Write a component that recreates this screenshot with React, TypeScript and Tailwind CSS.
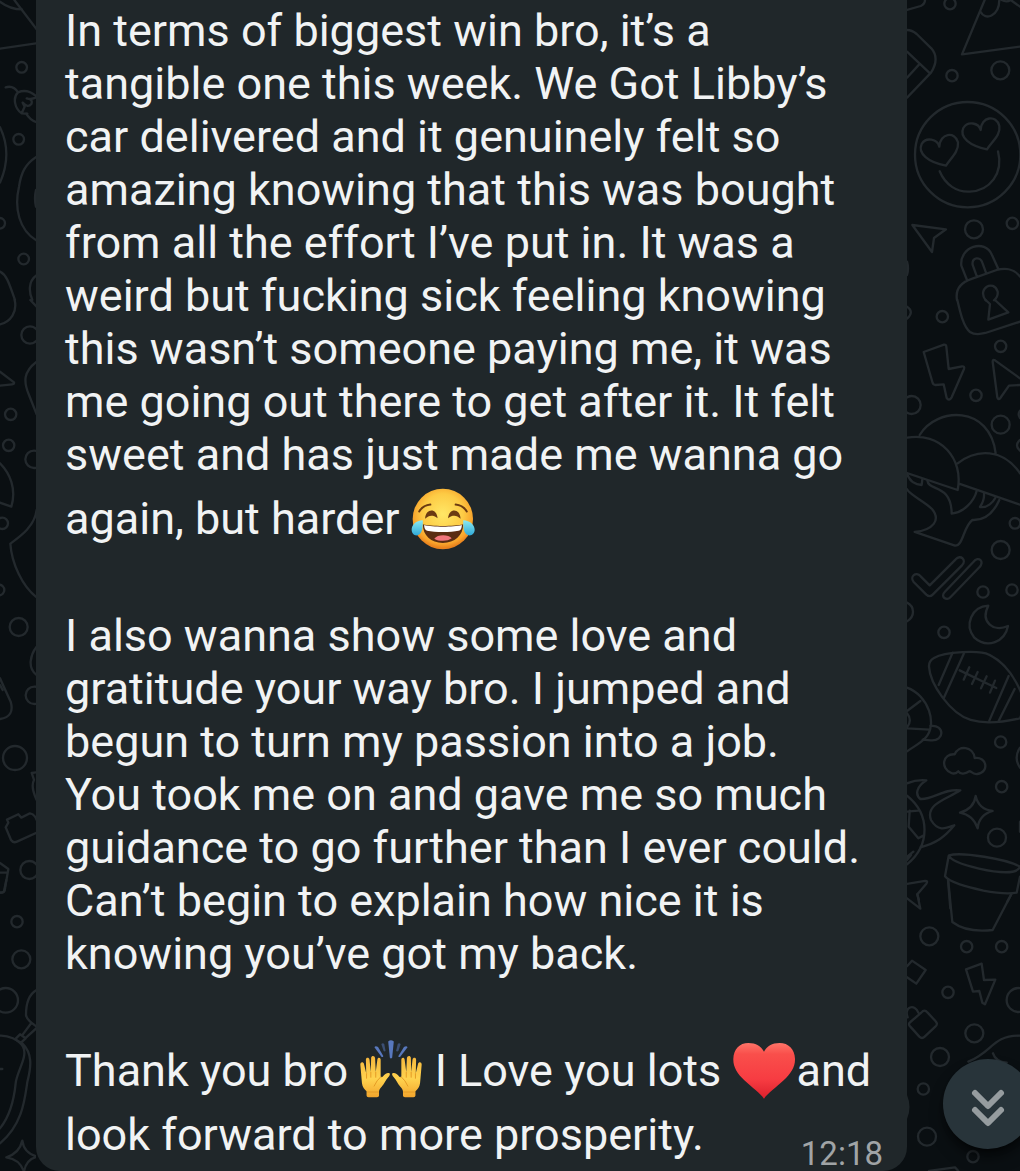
import type { ReactNode } from "react";

function Emoji({ children }: { children: ReactNode }) {
  return <span className="leading-[75px]">{children}</span>;
}

function JoyEmoji() {
  return (
    <svg
      role="img"
      aria-label="Face with tears of joy"
      viewBox="39 36 195 190"
      className="inline h-16 w-16 align-[-17px]"
    >
      <defs>
        <radialGradient id="joy-face" cx="50%" cy="42%" r="56%">
          <stop offset="0" stopColor="#ffe766" />
          <stop offset="0.6" stopColor="#fdcb45" />
          <stop offset="0.88" stopColor="#f8a42c" />
          <stop offset="1" stopColor="#e9821d" />
        </radialGradient>
        <linearGradient id="joy-tear" x1="0" y1="0" x2="0" y2="1">
          <stop offset="0" stopColor="#8ceaf2" />
          <stop offset="1" stopColor="#2fa9d8" />
        </linearGradient>
      </defs>
      <circle cx="136" cy="131" r="92" fill="url(#joy-face)" />
      <g fill="none" stroke="#6b3a12" strokeLinecap="round">
        <path d="M64 108Q76 89 98 87" strokeWidth="6" />
        <path d="M175 87Q197 89 209 108" strokeWidth="6" />
      </g>
      <path d="M82 130C83 98 118 96 120 129C112 122 108 121 101 121C94 121 89 124 82 130Z" fill="#6b3a12" />
      <path d="M152 129C154 96 189 98 190 130C183 124 178 121 171 121C164 121 160 122 152 129Z" fill="#6b3a12" />
      <path d="M75 147C100 154 172 154 198 147C198 181 172 204 136 204C100 204 75 181 75 147Z" fill="#5a2d12" />
      <path d="M79 149C105 156 168 156 194 149Q194 164 184 167C160 172 112 172 88 167Q79 163 79 149Z" fill="#fff" />
      <path d="M110 191C119 177 154 177 163 190C151 200 123 200 110 191Z" fill="#f1767c" />
      <path d="M75 135C54 136 41 149 41 164C41 177 51 184 61 180C74 175 75 157 75 135Z" fill="url(#joy-tear)" />
      <path d="M198 135C219 136 233 149 233 164C233 177 222 184 212 180C199 175 198 157 198 135Z" fill="url(#joy-tear)" />
    </svg>
  );
}

const hand =
  "M44 116C44 108 53 107 55 114L62 143L61 102C61 94 71 94 72 102L76 139L77 96C78 88 88 88 89 97L91 139L96 101C97 93 106 94 106 102L106 153C108 157 112 154 116 149C120 143 128 140 133 143C136 146 133 151 129 155C121 164 117 175 109 184C104 190 101 194 101 199L101 211Q101 216 95 216L69 216Q63 216 63 211L63 198C57 192 50 184 49 173Z";

function HandsEmoji() {
  return (
    <svg
      role="img"
      aria-label="Raising hands"
      viewBox="40 41 195 190"
      className="inline h-16 w-16 align-[-17px]"
    >
      <defs>
        <linearGradient id="hand-fill" x1="0" y1="0" x2="0" y2="1">
          <stop offset="0" stopColor="#f5b63c" />
          <stop offset="0.55" stopColor="#ffd34f" />
          <stop offset="1" stopColor="#f2a52c" />
        </linearGradient>
      </defs>
      <g fill="#5878bd">
        <path d="M129 46Q137 39 146 46L141 96Q137 100 134 96Z" />
        <path d="M87 64Q90 57 98 63L114 90Q113 95 109 93Z" />
        <path d="M188 64Q185 57 177 63L160 90Q160 95 165 93Z" />
        <path d="M108 54Q113 49 117 54L121 75Q118 78 115 75Z" opacity="0.5" />
        <path d="M167 54Q162 49 158 54L153 75Q156 78 160 75Z" opacity="0.5" />
      </g>
      <g fill="url(#hand-fill)">
        <path d={hand} />
        <path d={hand} transform="matrix(-1 0 0 1 275 0)" />
      </g>
      <g fill="none" stroke="#e59a25" strokeWidth="3" strokeLinecap="round">
        <path d="M63 144V158M76 140V155M91 140V155M66 200H99M106 154Q94 164 86 182" />
        <path d="M212 144V158M199 140V155M184 140V155M176 200H209M169 154Q181 164 189 182" />
      </g>
    </svg>
  );
}

function HeartEmoji() {
  return (
    <svg
      role="img"
      aria-label="Red heart"
      viewBox="27 27 192 192"
      className="inline h-16 w-16 align-[-17px]"
    >
      <defs>
        <linearGradient id="heart-fill" x1="0" y1="0" x2="0" y2="1">
          <stop offset="0" stopColor="#ff7468" />
          <stop offset="0.2" stopColor="#f94f4b" />
          <stop offset="0.65" stopColor="#f73c42" />
          <stop offset="1" stopColor="#dc202c" />
        </linearGradient>
      </defs>
      <path
        d="M123 206C112 190 86 172 64 151C43 131 30 111 31 86C32 57 50 39 76 39C99 39 114 49 123 65C132 49 147 39 170 39C196 39 215 57 216 86C217 111 203 131 182 151C160 172 134 190 123 206Z"
        fill="url(#heart-fill)"
      />
    </svg>
  );
}

function LeftDoodles() {
  return (
    <svg aria-hidden="true" viewBox="0 0 36 1171" className="block w-full">
      <g fill="none" stroke="#23292d" strokeWidth="7" strokeLinejoin="round" strokeLinecap="round">
        <g transform="scale(0.3333)">
          <path d="M0 5Q30 28 66 28M43 0L110 88M0 146L110 130" />
          <circle cx="65" cy="202" r="16" />
          <circle cx="56" cy="418" r="16" />
          <path d="M17 262Q40 255 54 277C75 268 94 275 110 290M54 277C38 292 43 325 65 340L74 320L68 308Q84 325 94 312Q100 298 80 295Q94 300 108 292M65 340Q90 342 78 340Q90 360 110 367" />
          <path d="M0 382Q38 460 0 548M110 470C75 492 63 520 57 560C42 625 57 690 110 722M108 570Q102 595 108 620" />
          <circle cx="-1" cy="670" r="16" />
          <circle cx="71" cy="777" r="16" />
          <path d="M0 815C22 825 30 860 45 900M110 826C82 845 88 880 97 900" />
        </g>
        <g transform="translate(0 300) scale(0.3333)">
          <path d="M44 0C52 35 33 65 0 73M91 0L110 20M0 215L42 247Q44 254 30 254L0 257" />
          <circle cx="90" cy="105" r="26" />
          <path d="M110 185C70 215 70 245 87 285L110 343" />
          <circle cx="32" cy="343" r="17" />
          <circle cx="26" cy="436" r="17" />
          <circle cx="102" cy="478" r="26" />
          <path d="M0 490C30 520 50 567 34 620L0 608" />
          <circle cx="7" cy="670" r="17" />
          <path d="M110 630C104 680 60 710 31 731C35 790 67 860 110 892" />
          <circle cx="-3" cy="870" r="16" />
        </g>
        <g transform="translate(0 600) scale(0.3333)">
          <circle cx="56" cy="81" r="27" />
          <path d="M110 140C90 165 82 205 110 225M0 235L32 305Q45 350 0 357M0 255L8 270" />
          <circle cx="103" cy="286" r="26" />
          <circle cx="45" cy="474" r="36" />
          <path d="M110 517L95 519L102 540Q91 560 110 600" />
          <path d="M21 659L55 643L64 653L90 640Q104 642 110 660M21 659L25 668L17 682L33 720Q40 730 51 725L110 698" />
          <circle cx="88" cy="810" r="27" />
          <path d="M0 789L25 807L14 872Q10 880 0 877M0 818H22" />
        </g>
        <g transform="translate(0 880) scale(0.3333)">
          <path d="M19 0L12 34Q6 39 0 38" />
          <circle cx="51" cy="125" r="17" />
          <circle cx="64" cy="238" r="27" />
          <circle cx="17" cy="361" r="37" />
          <path d="M110 330C82 345 78 380 78 405Q80 420 110 440M94 429L68 464M110 444L78 473M60 463L77 475L63 488L45 478Z" />
          <path d="M0 467C25 466 55 478 69 500C85 530 50 575 47 610C42 660 32 705 0 745M67 490C98 520 94 560 82 606C74 660 67 735 0 790M0 567H7" />
          <path d="M67 782Q72 820 112 830Q78 838 72 875Q60 838 19 832Q58 820 67 782Z" />
        </g>
      </g>
    </svg>
  );
}

function RightDoodles() {
  return (
    <svg aria-hidden="true" viewBox="907 0 113 1171" className="block w-full">
      <g fill="none" stroke="#23292d" strokeWidth="7" strokeLinejoin="round" strokeLinecap="round">
        <g transform="translate(890 0) scale(0.3333)">
          <path d="M51 30L92 18Q105 12 105 0M51 90Q66 90 80 102L124 145Q150 175 123 218L51 293M51 155L120 220M51 233L87 194" />
          <circle cx="180" cy="11" r="17" />
          <circle cx="186" cy="227" r="17" />
          <circle cx="331" cy="211" r="27" />
          <path d="M284 0L216 163L390 140M272 36C285 62 327 50 328 0M335 0Q350 8 362 0L390 20" />
          <circle cx="233" cy="464" r="158" />
          <path d="M168 497C115 487 82 460 95 432C108 410 142 417 148 440C149 400 195 392 204 427C207 455 182 475 168 497Z" />
          <path d="M291 448C240 437 207 412 220 384C233 362 266 368 272 390C273 350 320 342 328 378C333 405 307 423 291 448Z" />
          <path d="M149 514C166 555 201 577 239 575C300 572 341 520 324 454" />
          <path d="M67 675L168 688L132 714L126 756Z" />
          <circle cx="252" cy="688" r="27" />
          <circle cx="367" cy="670" r="17" />
          <path d="M231 840L214 797C208 740 285 715 306 765L324 805M261 831L248 795C244 770 272 770 277 788L289 821M201 900C195 865 215 847 245 837L320 810C350 802 376 810 390 830" />
          <path d="M287 901C260 865 311 837 323 875Q325 890 312 901M51 785Q57 805 51 825" />
        </g>
        <g transform="translate(890 300) scale(0.3333)">
          <path d="M202 0C210 35 220 80 240 96Q256 107 286 99L390 65M287 0L300 12L295 59L355 37L315 0" />
          <path d="M51 20Q74 35 51 56" />
          <circle cx="157" cy="50" r="17" />
          <circle cx="332" cy="139" r="17" />
          <path d="M101 156L162 134Q168 133 169 140L176 207L216 199Q225 198 222 207L185 292Q177 305 170 294L161 253L136 255Q130 255 128 249Z" />
          <path d="M390 235L315 181Q308 177 308 185L322 292Q325 302 331 294L357 257L390 255" />
          <circle cx="258" cy="286" r="17" />
          <circle cx="65" cy="315" r="27" />
          <circle cx="332" cy="374" r="27" />
          <path d="M390 332Q382 343 390 354M390 420Q372 436 390 452" />
          <path d="M89 405C140 320 300 315 317 460M51 413C150 395 222 475 203 570L51 519M203 490C260 445 340 445 390 520M207 551L390 614" />
          <path d="M51 520Q60 552 95 555L97 538M112 541C115 575 184 550 185 641C220 638 252 605 260 573M282 580Q284 600 270 621C293 625 310 605 316 594M328 600C310 640 285 662 247 660C220 680 220 738 195 737L74 696C130 690 153 660 126 627C100 602 60 585 51 568" />
          <circle cx="375" cy="670" r="16" />
          <circle cx="332" cy="750" r="27" />
          <path d="M71 846C58 830 78 813 92 829L119 856L197 778C212 762 231 780 216 796L128 884Q119 893 109 884ZM268 802L182 891C170 905 150 890 164 876L250 786C266 766 285 785 268 802Z" />
          <circle cx="279" cy="876" r="17" />
          <circle cx="366" cy="870" r="17" />
        </g>
        <g transform="translate(890 600) scale(0.3333)">
          <path d="M51 8C75 20 75 50 51 64" />
          <circle cx="162" cy="97" r="17" />
          <path d="M295 17C245 20 222 75 253 113C292 148 345 125 354 78C310 98 270 65 295 17Z" />
          <path d="M132 174C165 155 270 150 297 164C350 190 380 240 400 295Q402 325 390 355C325 370 275 370 242 360C180 340 120 252 117 200Q116 183 132 174ZM188 158L146 255M222 160L161 295M356 228L298 362M374 267L326 363" />
          <path d="M209 211L319 264M238 202L221 239M263 216L246 252M290 229L273 265M315 242L300 278" />
          <path d="M51 263C115 285 145 375 105 415C92 430 69 441 51 454M51 333L91 303M51 385L119 389M121 378C165 372 165 425 122 421L98 419M51 340Q68 360 51 382" />
          <circle cx="332" cy="426" r="17" />
          <circle cx="335" cy="560" r="17" />
          <path d="M184 519C150 505 158 460 194 463C205 434 250 439 254 474C291 469 299 517 262 522C246 524 244 512 238 514C224 524 210 522 205 514Q194 524 184 519ZM390 443Q370 473 390 503" />
          <path d="M51 550Q80 538 109 541C80 560 74 583 91 597C130 600 160 565 211 571C171 597 105 612 123 660C145 697 168 685 193 676C165 710 140 730 91 742M51 587C120 642 122 735 51 793M51 635L84 632M59 632L56 680L85 715L100 707M51 770L70 755M51 780L63 765" />
          <path d="M257 588Q267 629 308 633Q267 645 263 685Q249 645 210 638Q252 626 257 588Z" />
          <circle cx="321" cy="713" r="27" />
          <path d="M177 766C215 755 350 777 390 800C382 825 320 818 267 806C220 795 180 780 177 766ZM176 768L165 829C180 848 230 860 280 872Q345 884 380 878L390 830M174 840L181 925M364 883L352 905M51 852L105 843Q115 842 109 851L82 883L87 900" />
          <path d="M390 665V695" />
        </g>
        <g transform="translate(890 880) scale(0.3333)">
          <path d="M82 43L91 86L51 55M175 5L187 126Q230 159 308 150L364 43" />
          <circle cx="118" cy="169" r="27" />
          <circle cx="230" cy="200" r="17" />
          <circle cx="335" cy="200" r="17" />
          <path d="M51 259L66 242L107 270L79 311L51 292" />
          <circle cx="174" cy="337" r="17" />
          <path d="M228 268L275 251L282 300L316 299L285 373L277 368L268 333L249 335Z" />
          <circle cx="386" cy="360" r="36" />
          <path d="M94 398Q103 386 113 398L137 424Q145 432 136 440L104 470Q96 478 88 470L61 440Q53 432 61 426ZM53 412C40 380 75 370 85 398" />
          <circle cx="253" cy="460" r="27" />
          <circle cx="150" cy="531" r="27" />
          <circle cx="100" cy="627" r="17" />
          <circle cx="111" cy="770" r="27" />
          <circle cx="249" cy="830" r="17" />
          <path d="M235 545C310 515 305 467 390 467M309 520Q317 545 350 548M117 873L195 862L205 873" />
        </g>
      </g>
      <path d="M907 1095Q912 1107 907 1119Z" fill="#20272a" />
    </svg>
  );
}

export default function App() {
  return (
    <main className="relative flex min-h-screen overflow-hidden bg-[#0a0f12] font-['Roboto',sans-serif]">
      <div className="w-9 shrink-0">
        <LeftDoodles />
      </div>

      <article className="min-w-0 flex-1 rounded-b-3xl bg-[#20272a] pt-1 pr-6 pl-[29px]">
        <div className="space-y-[53px] pr-2 text-[45px] leading-[53px] text-[#f1f3f4]">
          <p>
            In terms of biggest win bro, it’s a tangible one this week. We Got
            Libby’s car delivered and it genuinely felt so amazing knowing that
            this was bought from all the effort I’ve put in. It was a weird but
            fucking sick feeling knowing this wasn’t someone paying me, it was
            me going out there to get after it. It felt sweet and has just made
            me wanna go again, but harder{" "}
            <Emoji>
              <JoyEmoji />
            </Emoji>
          </p>
          <p>
            I also wanna show some love and gratitude your way bro. I jumped and
            begun to turn my passion into a job.
            <br />
            You took me on and gave me so much guidance to go further than I
            ever could. Can’t begin to explain how nice it is knowing you’ve got
            my back.
          </p>
          <p>
            Thank you bro{" "}
            <Emoji>
              <HandsEmoji />
            </Emoji>{" "}
            I Love you lots{" "}
            <Emoji>
              <HeartEmoji />
            </Emoji>
            and look forward to more prosperity.
          </p>
        </div>
        <time className="-mt-6 block text-right text-[33px] leading-[34px] text-[#a0a4a6]">
          12:18
        </time>
      </article>

      <div className="w-[113px] shrink-0">
        <RightDoodles />
      </div>

      <button
        type="button"
        aria-label="Scroll to latest message"
        className="absolute -right-[13px] bottom-[22px] flex size-[90px] items-center justify-center rounded-full bg-[#28343a] shadow-lg shadow-black/60"
      >
        <svg
          aria-hidden="true"
          viewBox="0 0 90 90"
          className="size-full"
          fill="none"
          stroke="#969c9f"
          strokeWidth="6"
          strokeLinecap="round"
          strokeLinejoin="round"
        >
          <path d="M32 34L45 47L58 34M32 51L45 64L58 51" />
        </svg>
      </button>
    </main>
  );
}
